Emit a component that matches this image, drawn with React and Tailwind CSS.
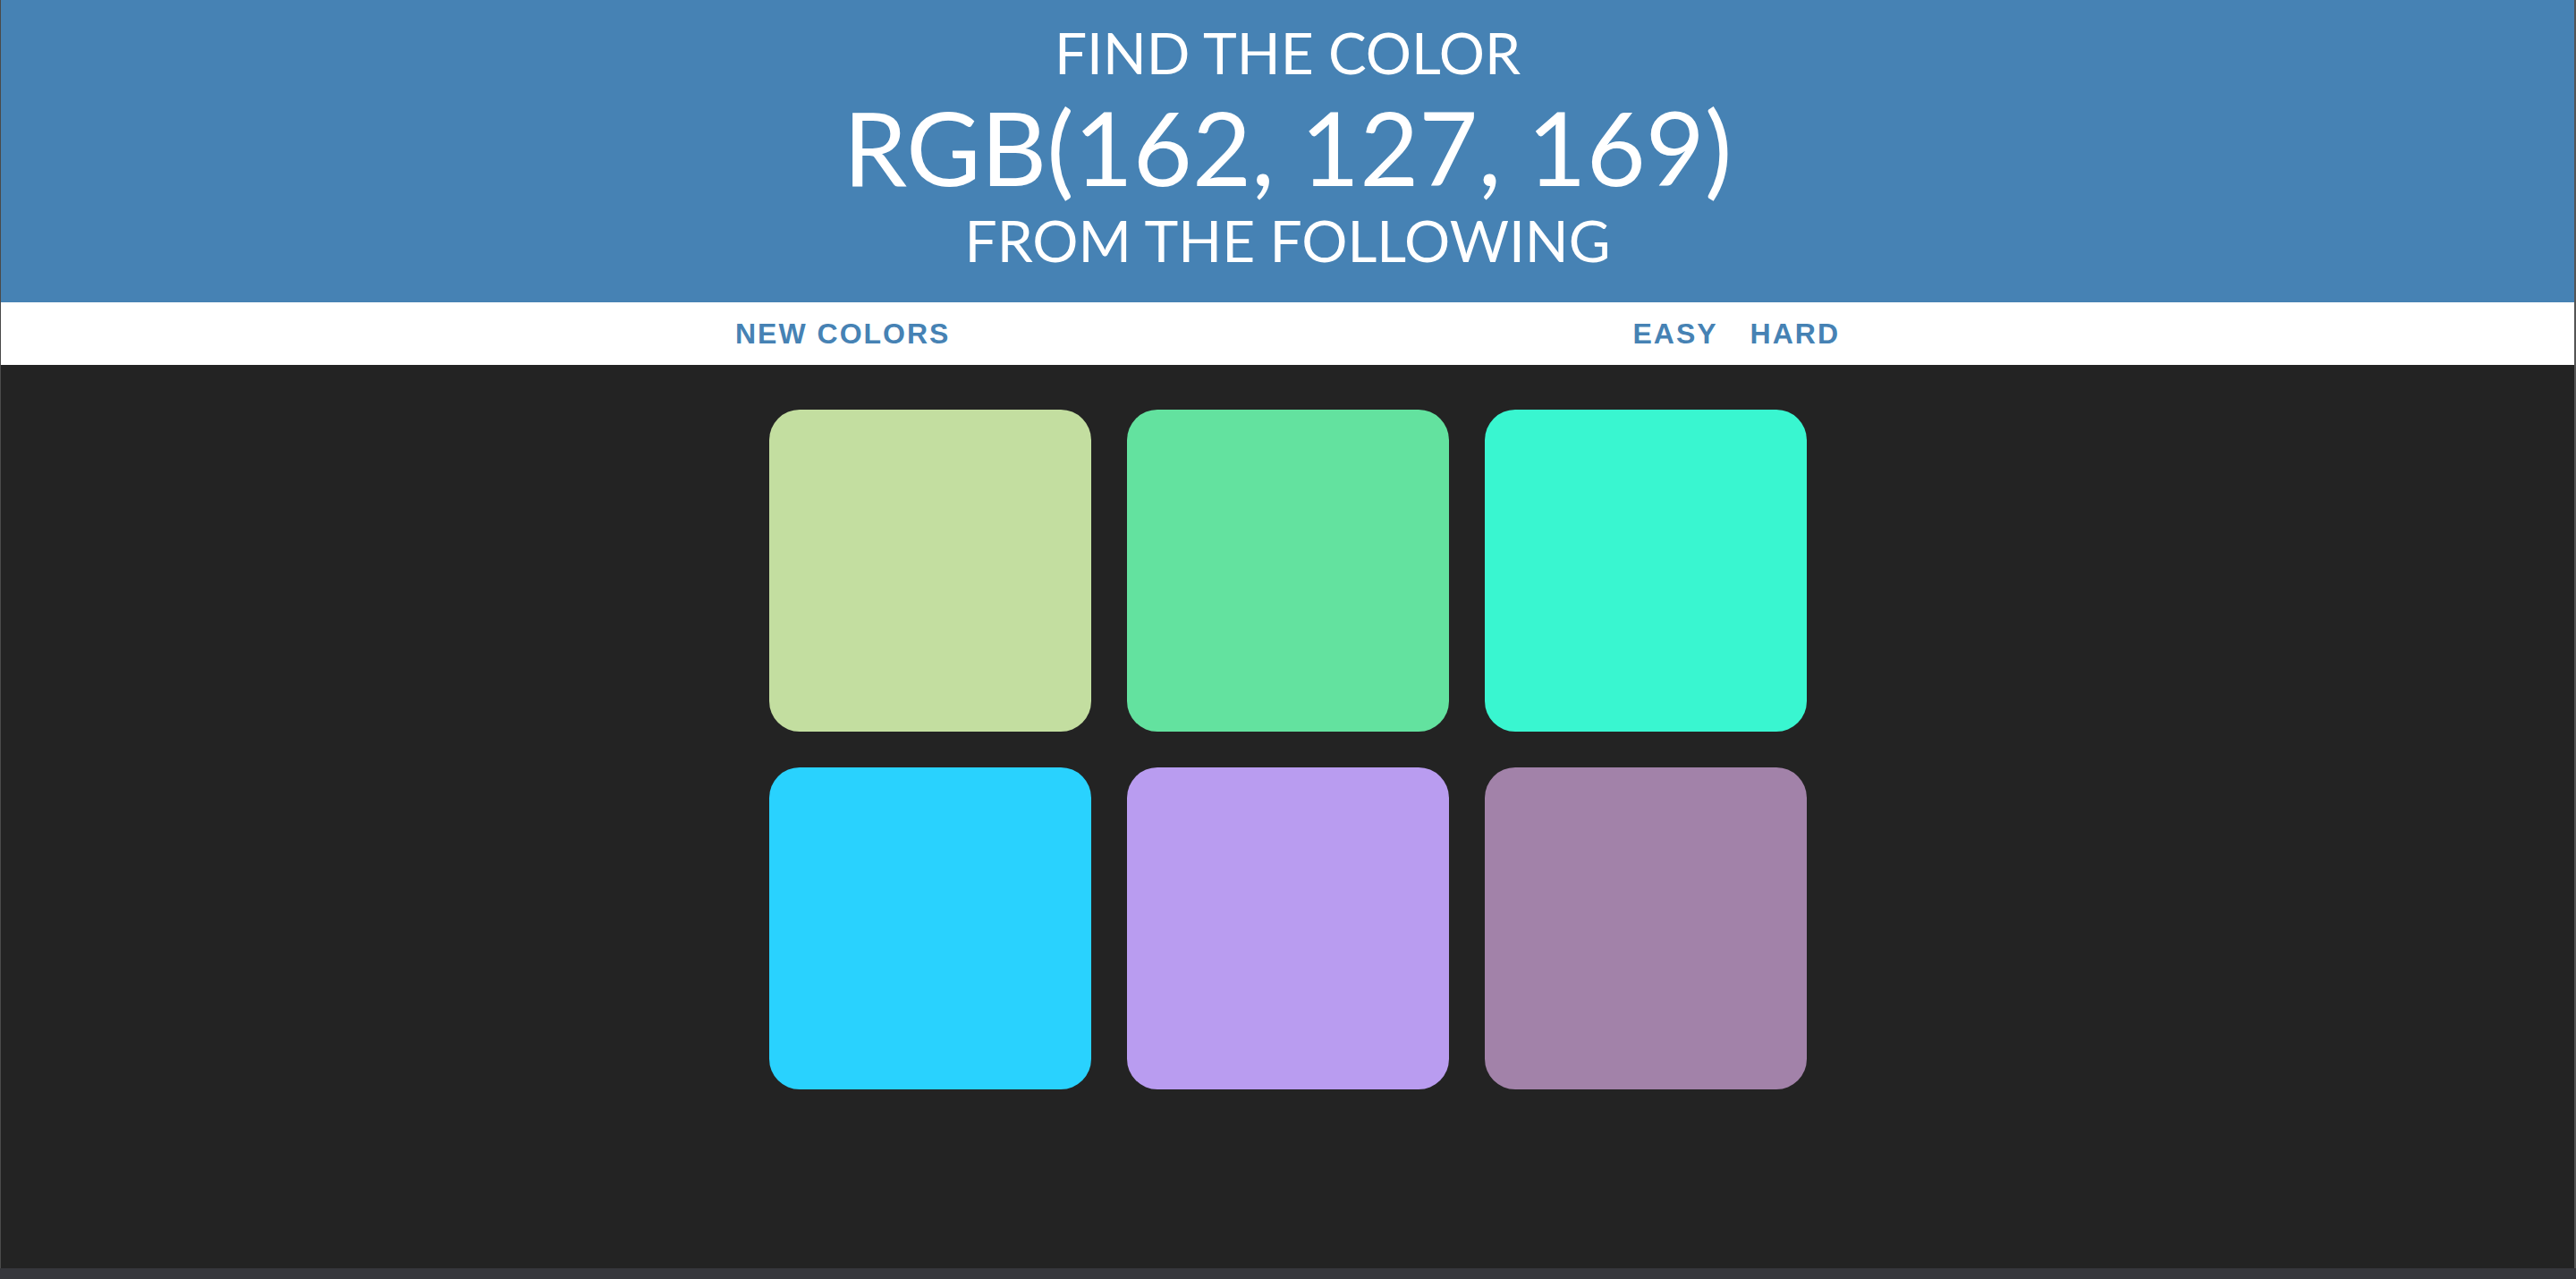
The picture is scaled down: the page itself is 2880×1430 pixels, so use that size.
import React from 'react';

const colors = ['#c3dea0', '#63e29f', '#39f6d0', '#29d2fe', '#b99cf0', '#a282a9'];

const App = () => {
    return (
        <div className="h-[1430px] w-full flex flex-col bg-[#232323] overflow-hidden">
            <div className="flex-1 flex flex-col border-l border-l-[#4a4a4a] border-r-2 border-r-[#555]">
                {/* Header */}
                <header className="h-[338px] shrink-0 bg-[#4682b4] text-white text-center font-['Lato',sans-serif] font-normal uppercase pt-[24px]">
                    <h1>
                        <span className="block text-[64px] leading-[70px]">Find the color</span>
                        <span className="block text-[114px] leading-[140px]">RGB(162, 127, 169)</span>
                        <span className="block text-[64px] leading-[70px]">From the following</span>
                    </h1>
                </header>

                {/* Stripe */}
                <div className="h-[70px] shrink-0 bg-white flex items-center justify-center font-['Liberation_Sans',Arial,sans-serif] font-bold text-[32px] tracking-[2px] text-[#4682b4] uppercase">
                    <button className="uppercase font-bold tracking-[2px]">New Colors</button>
                    <span className="w-[763px]" />
                    <button className="uppercase font-bold tracking-[2px]">Easy</button>
                    <button className="uppercase font-bold tracking-[2px] ml-[36px]">Hard</button>
                </div>

                {/* Squares */}
                <div className="flex-1 flex justify-center pt-[50px]">
                    <div className="grid grid-cols-3 gap-[40px] w-[1160px] h-fit">
                        {colors.map((c, i) => (
                            <div
                                key={i}
                                className="w-[360px] h-[360px] rounded-[34px]"
                                style={{ backgroundColor: c }}
                            />
                        ))}
                    </div>
                </div>
            </div>
            <div className="h-[12px] shrink-0 bg-[#36373c]" />
        </div>
    );
};

export default App;
